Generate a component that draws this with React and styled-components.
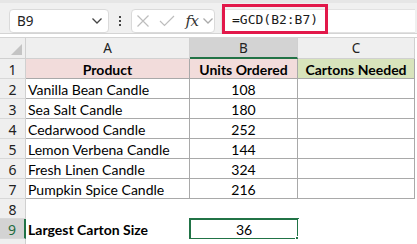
import React from "react";
import styled, { createGlobalStyle } from "styled-components";

const Global = createGlobalStyle`
  html, body { margin: 0; padding: 0; background: #ffffff; }
  #root { width: 417px; height: 244px; overflow: hidden; }
`;

const Root = styled.div`
  width: 417px;
  height: 244px;
  overflow: hidden;
  display: flex;
  flex-direction: column;
  background: #ffffff;
`;

const Toolbar = styled.div`
  height: 37px;
  box-sizing: border-box;
  background: #f0f0f0;
  border-top: 3px solid #e6e6e6;
  border-bottom: 1px solid #d4d4d4;
  display: flex;
  align-items: flex-start;
  padding: 6px 2px 0 9px;
  position: relative;
`;

const Box = styled.div`
  height: 24px;
  box-sizing: border-box;
  background: #ffffff;
  border: 1px solid #dadada;
  border-radius: 4px;
  display: flex;
  align-items: center;
`;

const NameBox = styled(Box)`
  width: 100px;
  padding: 0 5px 0 7px;
  justify-content: space-between;
  font-family: "Noto Sans", "Open Sans", sans-serif;
  font-size: 13.5px;
  color: #222;
`;

const Dots = styled.div`
  width: 22px;
  height: 24px;
  display: flex;
  flex-direction: column;
  align-items: center;
  justify-content: center;
  gap: 2px;
  span {
    width: 2px;
    height: 2px;
    background: #444;
  }
`;

const FxBox = styled(Box)`
  width: 84px;
  padding: 0 0 0 4px;
  margin-right: 6px;
`;

const IconSlot = styled.span`
  display: flex;
  align-items: center;
  justify-content: center;
  width: ${(p) => p.$w}px;
  margin-right: ${(p) => p.$gap || 0}px;
`;

const FxLabel = styled.span`
  font-family: "DejaVu Serif", "Liberation Serif", serif;
  font-style: italic;
  font-size: 15px;
  color: #333;
  letter-spacing: -0.5px;
`;

const FormulaBar = styled(Box)`
  flex: 1;
  border-radius: 0;
  border-right: none;
  border-color: #e2e2e2;
`;

const Highlight = styled.div`
  position: absolute;
  left: 222px;
  top: 1px;
  width: 106px;
  height: 30px;
  box-sizing: border-box;
  border: 3px solid #e2184a;
  display: flex;
  align-items: center;
  padding-left: 7px;
  font-family: "DejaVu Sans Mono", "Liberation Mono", monospace;
  font-size: 13px;
  color: #1a1a1a;
`;

const Sheet = styled.div`
  display: grid;
  grid-template-columns: 26px 164px 108px 117px 2px;
  grid-template-rows: 21px;
  grid-auto-rows: 20px;
  margin-top: 3px;
  border-top: 1px solid #d4d4d4;
  background: #fff;
`;

const Corner = styled.div`
  background: #efefef;
  border-right: 1px solid #d0d0d0;
  border-bottom: 1px solid #d0d0d0;
  position: relative;
  &::after {
    content: "";
    position: absolute;
    right: 3px;
    bottom: 3px;
    width: 0;
    height: 0;
    border-left: 11px solid transparent;
    border-bottom: 11px solid #c4c4c4;
  }
`;

const ColHead = styled.div`
  background: ${(p) => (p.$active ? "#d3d3d3" : "#efefef")};
  border-right: 1px solid #d0d0d0;
  border-bottom: ${(p) => (p.$active ? "2px solid #217346" : "1px solid #d0d0d0")};
  box-sizing: border-box;
  display: flex;
  align-items: center;
  justify-content: center;
  font-family: "Noto Sans", "Open Sans", sans-serif;
  font-size: 13.5px;
  color: #222;
  padding-top: ${(p) => (p.$active ? "1px" : "0")};
`;

const RowHead = styled.div`
  background: ${(p) => (p.$active ? "#d3d3d3" : "#efefef")};
  border-right: ${(p) => (p.$active ? "2px solid #217346" : "1px solid #d0d0d0")};
  border-bottom: 1px solid #d8d8d8;
  box-sizing: border-box;
  display: flex;
  align-items: center;
  justify-content: center;
  padding-top: 1px;
  font-family: "Noto Sans", "Open Sans", sans-serif;
  font-size: 14px;
  color: ${(p) => (p.$active ? "#1e6b3d" : "#222")};
`;

const Cell = styled.div`
  box-sizing: border-box;
  background: ${(p) => p.$fill || "#ffffff"};
  border-right: ${(p) => (p.$border ? "1px solid #a9a9a9" : "none")};
  border-bottom: ${(p) => (p.$border ? "1px solid #a9a9a9" : "none")};
  display: flex;
  align-items: center;
  justify-content: ${(p) => (p.$align === "center" ? "center" : "flex-start")};
  padding: 1px 2px 0;
  font-family: Lato, "Noto Sans", sans-serif;
  font-size: 14px;
  font-weight: ${(p) => (p.$bold ? 700 : 400)};
  color: #000;
  white-space: nowrap;
  position: relative;
`;

const Selection = styled.div`
  position: absolute;
  left: -1px;
  top: -1px;
  right: -1px;
  bottom: -1px;
  border: 2px solid #217346;
  pointer-events: none;
  &::after {
    content: "";
    position: absolute;
    right: -4px;
    bottom: -4px;
    width: 5px;
    height: 5px;
    background: #217346;
    border-left: 1px solid #fff;
    border-top: 1px solid #fff;
  }
`;

const Edge = styled.div`
  background: #ffffff;
`;

const Chevron = ({ color = "#444" }) => (
  <svg width="12" height="8" viewBox="0 0 12 8">
    <path d="M1.5 1.5 L6 6 L10.5 1.5" fill="none" stroke={color} strokeWidth="1.3" />
  </svg>
);

const rows = [
  ["Vanilla Bean Candle", "108"],
  ["Sea Salt Candle", "180"],
  ["Cedarwood Candle", "252"],
  ["Lemon Verbena Candle", "144"],
  ["Fresh Linen Candle", "324"],
  ["Pumpkin Spice Candle", "216"],
];

export default function App() {
  return (
    <Root>
      <Global />
      <Toolbar>
        <NameBox>
          <span>B9</span>
          <Chevron />
        </NameBox>
        <Dots>
          <span />
          <span />
          <span />
        </Dots>
        <FxBox>
          <IconSlot $w={14} $gap={9}>
            <svg width="14" height="14" viewBox="0 0 14 14">
              <path d="M1.5 1.5 L12.5 12.5 M12.5 1.5 L1.5 12.5" stroke="#bdbdbd" strokeWidth="1.2" />
            </svg>
          </IconSlot>
          <IconSlot $w={16} $gap={9}>
            <svg width="16" height="12" viewBox="0 0 16 12">
              <path d="M1 6 L5.5 10.5 L15 1" fill="none" stroke="#bdbdbd" strokeWidth="1.2" />
            </svg>
          </IconSlot>
          <IconSlot $w={16} $gap={2}>
            <FxLabel>fx</FxLabel>
          </IconSlot>
          <IconSlot $w={12}>
            <Chevron color="#aaa" />
          </IconSlot>
        </FxBox>
        <FormulaBar />
        <Highlight>=GCD(B2:B7)</Highlight>
      </Toolbar>
      <Sheet>
        <Corner />
        <ColHead>A</ColHead>
        <ColHead $active>B</ColHead>
        <ColHead>C</ColHead>
        <Edge />

        <RowHead>1</RowHead>
        <Cell $fill="#f2dcdb" $border $bold $align="center">Product</Cell>
        <Cell $fill="#f2dcdb" $border $bold $align="center">Units Ordered</Cell>
        <Cell $fill="#d8e4bc" $border $bold $align="center">Cartons Needed</Cell>
        <Edge />

        {rows.map(([name, units], i) => (
          <React.Fragment key={name}>
            <RowHead>{i + 2}</RowHead>
            <Cell $border>{name}</Cell>
            <Cell $border $align="center">{units}</Cell>
            <Cell $border />
            <Edge />
          </React.Fragment>
        ))}

        <RowHead>8</RowHead>
        <Cell />
        <Cell />
        <Cell />
        <Edge />

        <RowHead $active>9</RowHead>
        <Cell $bold>Largest Carton Size</Cell>
        <Cell $align="center">
          36
          <Selection />
        </Cell>
        <Cell />
        <Edge />

        <RowHead />
        <Cell />
        <Cell />
        <Cell />
        <Edge />
      </Sheet>
    </Root>
  );
}
